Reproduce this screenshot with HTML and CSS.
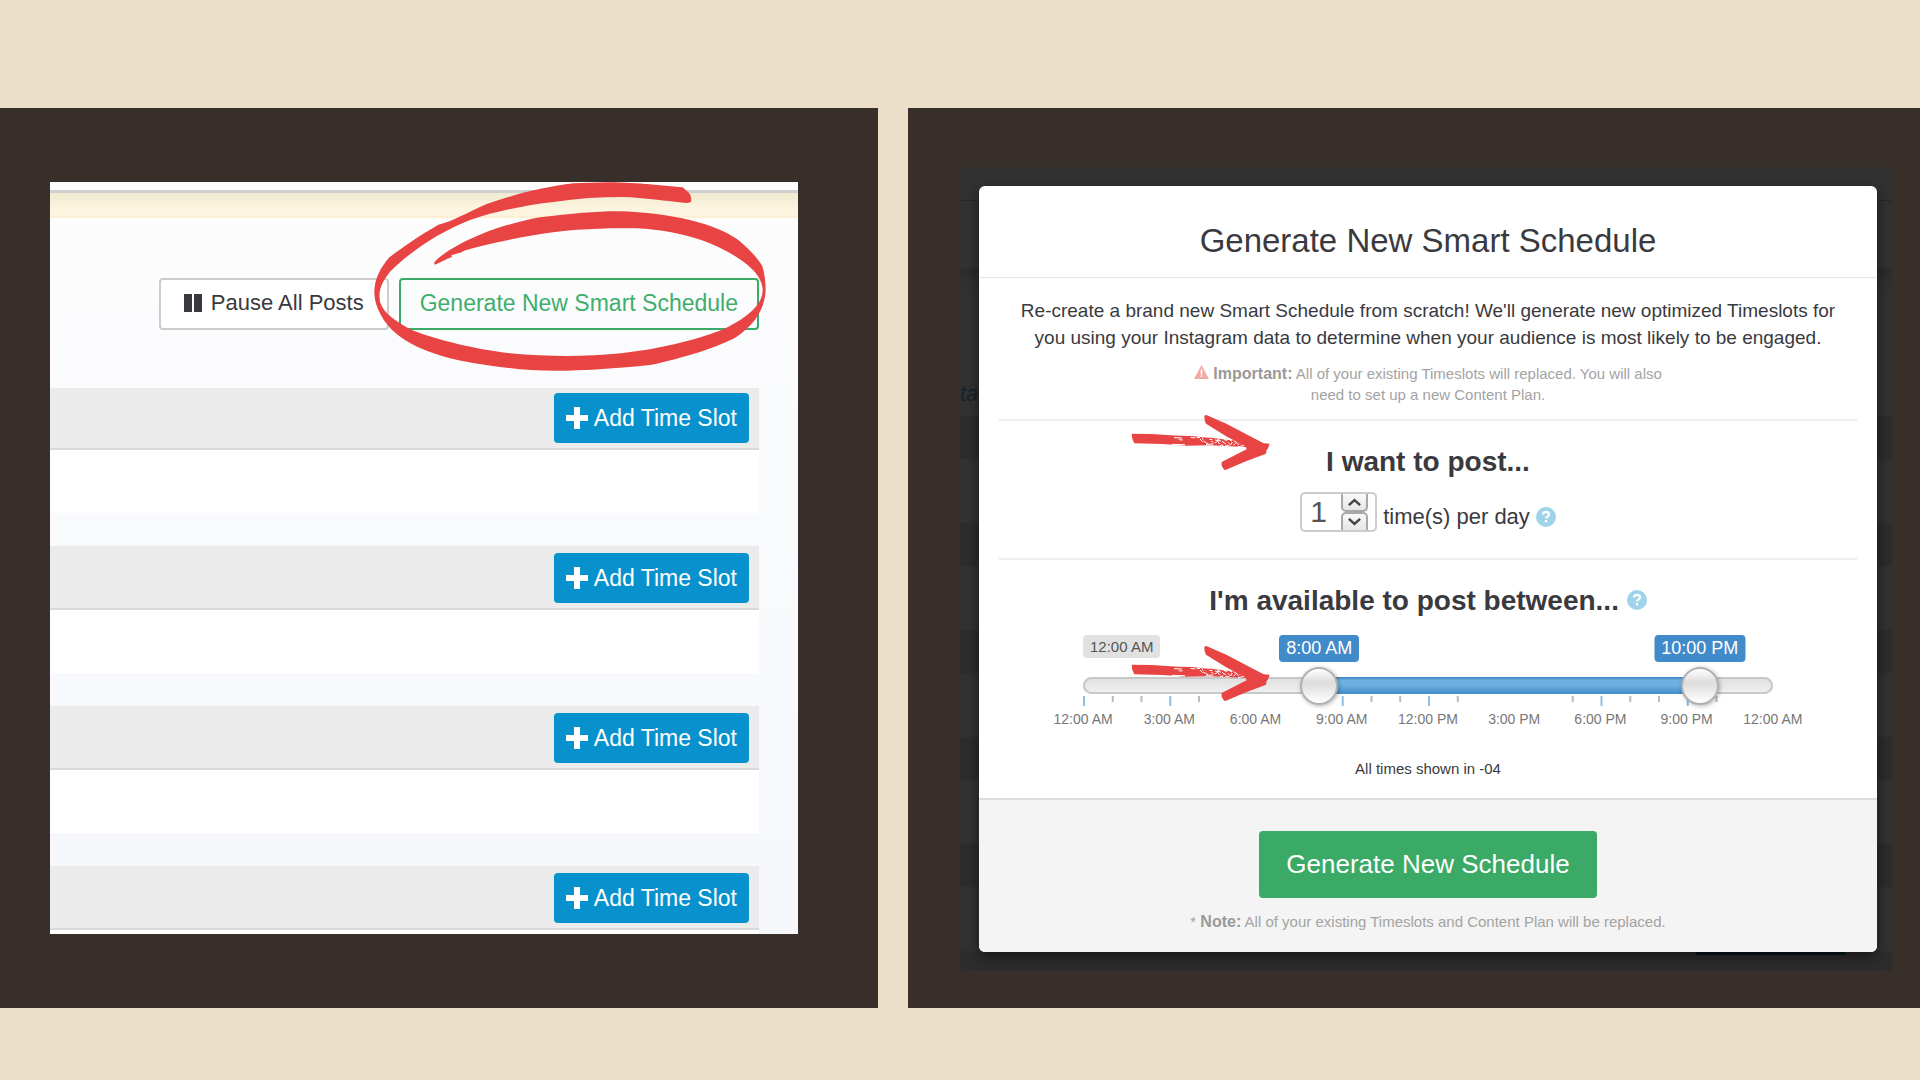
FILE: index.html
```html
<!DOCTYPE html>
<html lang="en">
<head>
    <meta charset="UTF-8">
    <meta name="viewport" content="width=device-width, initial-scale=1.0">
    <title>Generate New Smart Schedule</title>
    <link rel="stylesheet" href="styles.css">
</head>
<body>
    <!-- Shared shapes -->
    <svg class="defs" aria-hidden="true">
        <symbol id="plus" viewBox="0 0 24 24">
            <path d="M9 1h6v8h8v6h-8v8H9v-8H1V9h8z"/>
        </symbol>
        <symbol id="help" viewBox="0 0 20 20">
            <circle cx="10" cy="10" r="10" fill="#9fd3ea"/>
            <path d="M7 7.6C7 5.600 8.400 4.800 10 4.800s3 .9 3 2.600c0 2.200-2.900 2.100-2.900 4.100" fill="none" stroke="#fff" stroke-width="2.200"/>
            <path d="M8.900 13h2.400v2.400H8.900z" fill="#fff"/>
        </symbol>
        <symbol id="arrow" viewBox="90 40 426 177">
            <path d="M95 102l60 1 80 5 42 1 30 4 33 2 40 5 30 3 32 10 8 9-60-2-60-3-70 1-72-5-85-2q-8-12-8-29z"/>
            <path d="M222 114l24 1M215 134l40 1M236 120l12 1M272 113l14 2M300 118l8 8M310 124l14 8M328 119l9 1M318 134l22-1M345 121l18 3M344 130l9-5 6 8M366 125l12 8M372 120l10 2M384 128l8 8 5-9M402 124l8 3M400 137l9-9 7 8M418 131l14 1M422 139l12-2M360 137l10-1M290 113l10 1M306 114l3 6M334 125l6 3M352 118l6 2M376 138l12 0M390 122l6 2M412 126l10 2M414 140l8 1M428 135l8 0" fill="none" stroke="#fff" stroke-width="3"/>
            <path d="M313 50q2-5 6-4l60 26 70 37 42 22 18 1-5 14-4 5-2 11-60 23-60 25q-4 2-7-2-8-9-6-21l60-31 15-7-4-9-55-29-63-39q-6-9-5-22z"/>
        </symbol>
    </svg>

    <main class="board">
        <section class="frame frame-left">
            <div class="shot">
                <div class="topbar"></div>
                <div class="notice"></div>
                <div class="actions">
                    <button type="button" class="btn btn-pause">
                        <svg class="pause-icon" viewBox="0 0 18 18"><path d="M0 0h8v18H0zM10 0h8v18h-8z"/></svg>
                        Pause All Posts
                    </button>
                    <button type="button" class="btn btn-outline">Generate New Smart Schedule</button>
                </div>

                <div class="slots">
                    <div class="slot slot-first">
                        <div class="slot-header"><button type="button" class="btn btn-add"><svg class="plus-icon"><use href="#plus"/></svg>Add Time Slot</button></div>
                        <div class="slot-body"></div>
                    </div>
                    <div class="slot">
                        <div class="slot-header"><button type="button" class="btn btn-add"><svg class="plus-icon"><use href="#plus"/></svg>Add Time Slot</button></div>
                        <div class="slot-body"></div>
                    </div>
                    <div class="slot">
                        <div class="slot-header"><button type="button" class="btn btn-add"><svg class="plus-icon"><use href="#plus"/></svg>Add Time Slot</button></div>
                        <div class="slot-body"></div>
                    </div>
                    <div class="slot slot-last">
                        <div class="slot-header"><button type="button" class="btn btn-add"><svg class="plus-icon"><use href="#plus"/></svg>Add Time Slot</button></div>
                        <div class="slot-body"></div>
                    </div>
                </div>

                <!-- Hand drawn circle over the button -->
                <svg class="circle-mark" viewBox="0 0 1380 900" aria-hidden="true">
                    <path d="M968 82C900 77 850 68 740 67L640 70C560 80 480 98 380 132C320 158 275 186 235 194C170 232 130 260 88 292C60 325 42 360 43 400C44 440 70 490 110 522C180 580 300 608 440 623C500 632 560 633 620 632C700 630 770 625 870 615C960 597 1080 560 1130 530C1190 490 1215 440 1217 390C1217 360 1213 340 1207 318C1190 290 1165 265 1135 240C1100 215 1050 195 990 180C930 167 850 155 780 154C720 153 640 160 540 172C480 183 420 200 370 220C300 248 240 285 222 308L225 314L250 302L262 296L276 291L274 286L305 277L312 272C370 255 440 240 520 226C620 208 720 203 830 205C900 208 970 222 1030 242C1100 268 1170 310 1195 350C1207 370 1210 385 1207 400C1203 440 1150 480 1090 508C1000 545 850 580 700 586C620 590 540 588 450 580C350 568 230 540 155 510C110 485 70 460 60 425C55 395 62 370 90 335C150 275 240 215 330 180C400 155 500 135 580 126C650 115 720 111 790 111C850 113 920 123 980 129L992 127Q998 110 985 97Z"/>
                </svg>
            </div>
        </section>

        <section class="frame frame-right">
            <div class="backdrop">
                <span class="behind-text">tag</span>
                <span class="behind-button"></span>

                <form class="modal">
                    <h1 class="modal-title">Generate New Smart Schedule</h1>

                    <div class="modal-body">
                        <div class="intro">
                            <p class="lead">Re-create a brand new Smart Schedule from scratch! We'll generate new optimized Timeslots for<br>you using your Instagram data to determine when your audience is most likely to be engaged.</p>
                            <p class="small-note">
                                <svg class="warn-icon" viewBox="0 0 15 14"><path d="M7.500 0L15 14H0z" fill="#f3aaa6"/><path d="M6.700 4.500h1.600v5H6.700zM6.700 10.500h1.600V12H6.700z" fill="#fff"/></svg>
                                <strong>Important:</strong> All of your existing Timeslots will replaced. You will also<br>need to set up a new Content Plan.
                            </p>
                        </div>

                        <div class="option">
                            <svg class="arrow arrow-count" aria-hidden="true"><use href="#arrow"/></svg>
                            <h2>I want to post...</h2>
                            <div class="count-row">
                                <div class="spinner">
                                    <input type="text" id="count" value="1">
                                    <div class="spinner-buttons">
                                        <button type="button" aria-label="More"><svg viewBox="0 0 12 8"><path d="M1.500 6.500L6 2.500l4.500 4"/></svg></button>
                                        <button type="button" aria-label="Less"><svg viewBox="0 0 12 8"><path d="M1.500 1.500L6 5.500l4.500-4"/></svg></button>
                                    </div>
                                </div>
                                <label for="count">time(s) per day</label>
                                <svg class="help-icon"><use href="#help"/></svg>
                            </div>
                        </div>

                        <div class="option option-range">
                            <svg class="arrow arrow-range" aria-hidden="true"><use href="#arrow"/></svg>
                            <h2>I'm available to post between... <svg class="help-icon"><use href="#help"/></svg></h2>
                            <div class="range">
                                <div class="range-labels">
                                    <span class="range-min">12:00 AM</span>
                                    <label for="from" class="range-value" style="left: 33.33%">8:00 AM</label>
                                    <label for="to" class="range-value" style="left: 91.67%">10:00 PM</label>
                                </div>
                                <div class="track">
                                    <div class="track-inner"><div class="track-fill" style="left: 33.33%; width: 58.34%"></div></div>
                                    <input type="range" id="from" min="0" max="24" value="8">
                                    <input type="range" id="to" min="0" max="24" value="22">
                                </div>
                                <svg class="ticks" aria-hidden="true">
                                    <g class="tick-big">
                                        <path d="M0 0h2v10H0z"/>
                                        <rect x="12.5%" width="2" height="10"/>
                                        <rect x="37.5%" width="2" height="10"/>
                                        <rect x="50%" width="2" height="10"/>
                                        <rect x="75%" width="2" height="10"/>
                                        <rect x="87.5%" width="2" height="10"/>
                                    </g>
                                    <g class="tick-small">
                                        <rect x="4.17%" width="2" height="6"/>
                                        <rect x="8.33%" width="2" height="6"/>
                                        <rect x="16.67%" width="2" height="6"/>
                                        <rect x="41.67%" width="2" height="6"/>
                                        <rect x="45.83%" width="2" height="6"/>
                                        <rect x="54.17%" width="2" height="6"/>
                                        <rect x="70.83%" width="2" height="6"/>
                                        <rect x="79.17%" width="2" height="6"/>
                                        <rect x="83.33%" width="2" height="6"/>
                                        <rect x="91.67%" width="2" height="6"/>
                                    </g>
                                </svg>
                                <div class="hours">
                                    <span>12:00 AM</span>
                                    <span>3:00 AM</span>
                                    <span>6:00 AM</span>
                                    <span>9:00 AM</span>
                                    <span>12:00 PM</span>
                                    <span>3:00 PM</span>
                                    <span>6:00 PM</span>
                                    <span>9:00 PM</span>
                                    <span>12:00 AM</span>
                                </div>
                            </div>
                            <p class="timezone">All times shown in -04</p>
                        </div>
                    </div>

                    <div class="modal-footer">
                        <button type="button" class="btn btn-generate">Generate New Schedule</button>
                        <p class="small-note">* <strong>Note:</strong> All of your existing Timeslots and Content Plan will be replaced.</p>
                    </div>
                </form>
            </div>
        </section>
    </main>
</body>
</html>
```
FILE: styles.css
```css
* {
    box-sizing: border-box;
}
body {
    margin: 0;
    background-color: #ebdfc9;
    font-family: "Liberation Sans", Arial, sans-serif;
    color: #3a3a3e;
}
h1, h2, p {
    margin: 0;
}
.defs {
    position: absolute;
    width: 0;
    height: 0;
}
.board {
    display: grid;
    grid-template-columns: 878fr 1012fr;
    gap: 30px;
    padding: 108px 0 72px;
}
.frame {
    background-color: #382e2a;
}
.frame-left {
    padding: 74px 80px 74px 50px;
}
.frame-right {
    padding: 59px 28px 36px 52px;
}

/* Left: schedule page */
.shot {
    position: relative;
    background: linear-gradient(#fdfdfd, #fafbfd 30%, #f5f7fb);
}
.topbar {
    height: 11px;
    background-color: #fff;
    border-bottom: 3px solid #cfcfcf;
}
.notice {
    height: 25px;
    background: linear-gradient(#f0ead2, #fdf5e0 70%);
    border-bottom: 2px solid #fdefd2;
}
.actions {
    display: flex;
    justify-content: flex-end;
    gap: 10px;
    padding: 60px 39px 58px 0;
}
.btn {
    display: flex;
    align-items: center;
    justify-content: center;
    border-radius: 4px;
    font-family: inherit;
    font-size: 23px;
    white-space: nowrap;
    cursor: pointer;
}
.btn-pause {
    gap: 9px;
    height: 52px;
    padding: 0 23px 2px;
    background-color: #fff;
    border: 2px solid #ccc;
    color: #3a3a3e;
    font-size: 22px;
}
.btn-outline {
    height: 52px;
    padding: 0 19px 2px;
    background-color: transparent;
    border: 2px solid #3aaa66;
    color: #3fae6c;
}
.pause-icon {
    width: 18px;
    height: 18px;
    fill: #3a3a3e;
}
.slots {
    display: flex;
    flex-direction: column;
    gap: 33px;
    margin-right: 39px;
}
.slot-header {
    display: flex;
    justify-content: flex-end;
    height: 64px;
    padding: 7px 10px 0 0;
    background-color: #ebebeb;
    border-bottom: 2px solid #dadada;
}
.slot-first .slot-header {
    height: 62px;
    padding-top: 5px;
}
.slot-body {
    height: 63px;
    background-color: #fff;
}
.slot-last .slot-body {
    height: 4px;
}
.btn-add {
    gap: 5px;
    height: 50px;
    padding: 0 12px 0 11px;
    background-color: #0892cd;
    border: 0;
    color: #fff;
}
.plus-icon {
    width: 24px;
    height: 24px;
    fill: #fff;
}
.circle-mark {
    position: absolute;
    top: -22px;
    right: -22px;
    width: 460px;
    height: 300px;
    fill: #e84443;
    pointer-events: none;
}

/* Right: dialog over the darkened page */
.backdrop {
    position: relative;
    padding: 19px 15px 19px 19px;
    background:
        linear-gradient(#323232 33px, #282828 33px, #282828 34px, #323232 34px, #323232 102px, #2c2c2c 102px, #323232 122px) top / 100% 249px no-repeat,
        repeating-linear-gradient(#2d2d2d 0, #2d2d2d 43px, #323232 43px, #323232 107px) 0 249px no-repeat;
    overflow: hidden;
}
.behind-text {
    position: absolute;
    top: 214px;
    left: 0;
    font-size: 22px;
    font-style: italic;
    color: #16222a;
}
.behind-button {
    position: absolute;
    right: 46px;
    bottom: 16px;
    width: 151px;
    height: 50px;
    border-radius: 4px;
    background-color: #03161f;
}
.modal {
    position: relative;
    background-color: #fff;
    border-radius: 6px;
    box-shadow: 0 5px 15px rgba(0, 0, 0, 0.5);
    text-align: center;
    overflow: hidden;
}
.modal-title {
    padding: 36px 0 17px;
    border-bottom: 1px solid #e5e5e5;
    font-size: 33px;
    line-height: 38px;
    font-weight: normal;
}
.modal-body {
    padding: 0 20px;
}
.intro {
    padding: 19px 0 14px;
}
.lead {
    font-size: 19px;
    line-height: 27px;
    white-space: nowrap;
}
.small-note {
    font-size: 15px;
    line-height: 21px;
    color: #a3a3a3;
}
.intro .small-note {
    margin-top: 12px;
}
.small-note strong {
    font-size: 16px;
    color: #999;
}
.warn-icon {
    width: 15px;
    height: 14px;
}
.option {
    position: relative;
    border-top: 2px solid #eee;
    padding: 25px 0 26px;
}
h2 {
    font-size: 28px;
    line-height: 32px;
}
.help-icon {
    width: 20px;
    height: 20px;
}
.arrow {
    position: absolute;
    left: calc(50% - 298px);
    z-index: 2;
    width: 142px;
    height: 59px;
    fill: #e84443;
}
.arrow-count {
    top: -8px;
}
.arrow-range {
    top: 84px;
}
.count-row {
    display: flex;
    justify-content: center;
    align-items: center;
    gap: 6px;
    margin-top: 14px;
    font-size: 22px;
}
.count-row label {
    padding-top: 10px;
}
.count-row .help-icon {
    margin-top: 10px;
}
.spinner {
    display: flex;
    width: 77px;
    height: 40px;
    padding-right: 7px;
    border: 2px solid #ccc;
    border-radius: 5px;
    overflow: hidden;
}
.spinner input {
    flex: 1;
    min-width: 0;
    padding: 0 0 0 8px;
    border: 0;
    background: none;
    font-family: inherit;
    font-size: 30px;
    color: #555;
}
.spinner-buttons {
    display: flex;
    flex-direction: column;
    width: 27px;
}
.spinner-buttons button {
    flex: 1;
    display: flex;
    align-items: center;
    justify-content: center;
    padding: 0;
    background: linear-gradient(#fafafa, #e6e6e6);
    border: 2px solid #a8a8a8;
}
.spinner-buttons button:first-child {
    border-top: 0;
    border-radius: 0 0 5px 5px;
}
.spinner-buttons button:last-child {
    border-bottom: 0;
    border-radius: 5px 5px 0 0;
}
.spinner-buttons svg {
    width: 15px;
    height: 10px;
    fill: none;
    stroke: #444;
    stroke-width: 2;
}

/* Time range slider */
.option-range {
    padding-bottom: 19px;
}
.range {
    margin: 18px 84px 0;
}
.range-labels {
    position: relative;
    display: flex;
    height: 42px;
    margin-right: 38px;
}
.range-min {
    height: 23px;
    padding: 0 7px;
    border-radius: 4px;
    background-color: #e1e1e1;
    color: #555;
    font-size: 15px;
    line-height: 24px;
}
.range-value {
    position: absolute;
    top: 0;
    margin-left: 19px;
    padding: 0 7px;
    border-radius: 4px;
    background-color: #428bca;
    color: #fff;
    font-size: 18px;
    line-height: 27px;
    white-space: nowrap;
    transform: translateX(-50%);
}
.track {
    position: relative;
    height: 17px;
    padding: 0 19px;
    border-radius: 9px;
    background: linear-gradient(#dedede, #f2f2f2);
    box-shadow: inset 0 0 0 2px #c8c8c8;
}
.track-inner {
    position: relative;
    height: 100%;
}
.track-fill {
    position: absolute;
    top: 0;
    bottom: 0;
    background: linear-gradient(#428bca 1px, #6db2df 3px, #6db2df 45%, #428bca);
}
.track input {
    position: absolute;
    top: -10px;
    left: 0;
    width: 100%;
    height: 38px;
    margin: 0;
    background: none;
    appearance: none;
    pointer-events: none;
}
.track input::-webkit-slider-thumb {
    appearance: none;
    width: 38px;
    height: 38px;
    border: 2px solid #b0b0b0;
    border-radius: 50%;
    background: linear-gradient(#fff, #dcdcdc 40%, #fff);
    box-shadow: 1px 1px 4px rgba(0, 0, 0, 0.3);
    pointer-events: auto;
}
.ticks {
    display: block;
    width: 100%;
    height: 10px;
    margin-top: 2px;
}
.tick-big {
    fill: #8fc0e4;
}
.tick-small {
    fill: #bbb;
}
.hours {
    display: grid;
    grid-template-columns: repeat(9, 1fr);
    margin: 4px -43px 0;
    font-size: 14px;
    line-height: 18px;
    color: #777;
}
.timezone {
    margin-top: 31px;
    font-size: 15px;
    line-height: 20px;
}
.modal-footer {
    display: flex;
    flex-direction: column;
    align-items: center;
    gap: 13px;
    padding: 31px 0 20px;
    border-top: 2px solid #ddd;
    background-color: #f4f4f4;
}
.btn-generate {
    height: 67px;
    padding: 0 27px;
    background-color: #3aaa66;
    border: 0;
    color: #fff;
    font-size: 26px;
}
```
